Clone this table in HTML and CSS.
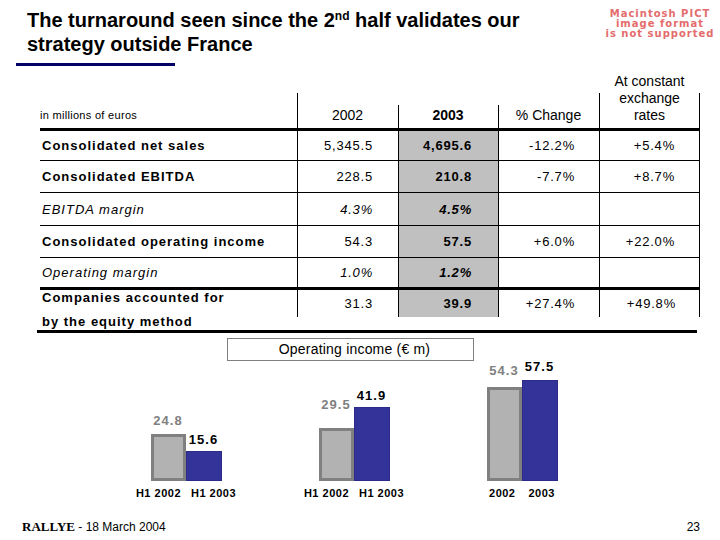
FILE: index.html
```html
<!DOCTYPE html>
<html lang="en">
<head>
<meta charset="utf-8">
<title>The turnaround seen since the 2nd half validates our strategy outside France</title>
<link rel="stylesheet" href="styles.css">
</head>
<body>
<div class="slide">
  <header class="head">
    <h1 class="title">The turnaround seen since the 2<sup>nd</sup> half validates our<br>strategy outside France</h1>
    <div class="pict">Macintosh PICT<br>image format<br>is not supported</div>
  </header>
  <div class="rule"></div>

  <div class="table">
    <div class="cell hd unit">in millions of euros</div>
    <div class="cell hd h1">2002</div>
    <div class="cell hd h2"><b>2003</b></div>
    <div class="cell hd h3">% Change</div>
    <div class="cell hd h4">At constant<br>exchange<br>rates</div>

    <div class="cell lbl">Consolidated net sales</div>
    <div class="cell num c1">5,345.5</div>
    <div class="cell num c2">4,695.6</div>
    <div class="cell num c3">-12.2%</div>
    <div class="cell num c4">+5.4%</div>

    <div class="cell lbl">Consolidated EBITDA</div>
    <div class="cell num c1">228.5</div>
    <div class="cell num c2">210.8</div>
    <div class="cell num c3">-7.7%</div>
    <div class="cell num c4">+8.7%</div>

    <div class="cell lbl it">EBITDA margin</div>
    <div class="cell num c1 it">4.3%</div>
    <div class="cell num c2 it">4.5%</div>
    <div class="cell num c3"></div>
    <div class="cell num c4"></div>

    <div class="cell lbl">Consolidated operating income</div>
    <div class="cell num c1">54.3</div>
    <div class="cell num c2">57.5</div>
    <div class="cell num c3">+6.0%</div>
    <div class="cell num c4">+22.0%</div>

    <div class="cell lbl it thick">Operating margin</div>
    <div class="cell num c1 it thick">1.0%</div>
    <div class="cell num c2 it thick">1.2%</div>
    <div class="cell num c3 thick"></div>
    <div class="cell num c4 thick"></div>

    <div class="cell lbl last"><span>Companies accounted for</span><span class="second">by the equity method</span></div>
    <div class="cell num c1 last">31.3</div>
    <div class="cell num c2 last">39.9</div>
    <div class="cell num c3 last">+27.4%</div>
    <div class="cell num c4 last">+49.8%</div>
  </div>
  <div class="rule-bottom"></div>

  <div class="chart-title">Operating income (€ m)</div>

  <div class="charts">
    <div class="chart">
      <div class="bars">
        <div class="bar-col"><span class="val grey up0b">24.8</span><div class="bar grey" style="height:47px"></div></div>
        <div class="bar-col"><span class="val">15.6</span><div class="bar blue" style="height:30px"></div></div>
      </div>
      <div class="xlabels"><span>H1 2002</span><span>H1 2003</span></div>
    </div>
    <div class="chart">
      <div class="bars">
        <div class="bar-col"><span class="val grey up2">29.5</span><div class="bar grey" style="height:53px"></div></div>
        <div class="bar-col"><span class="val up0">41.9</span><div class="bar blue" style="height:74px"></div></div>
      </div>
      <div class="xlabels"><span>H1 2002</span><span>H1 2003</span></div>
    </div>
    <div class="chart">
      <div class="bars">
        <div class="bar-col"><span class="val grey up1">54.3</span><div class="bar grey" style="height:94px"></div></div>
        <div class="bar-col"><span class="val up0b">57.5</span><div class="bar blue" style="height:101px"></div></div>
      </div>
      <div class="xlabels wide"><span>2002</span><span>2003</span></div>
    </div>
  </div>

  <footer class="foot">
    <span><b class="brand">RALLYE</b> - 18 March 2004</span>
    <span>23</span>
  </footer>
</div>
</body>
</html>
```

FILE: styles.css
```css
* { box-sizing: border-box; }
html, body { margin: 0; padding: 0; background: #fff; }
body {
  width: 720px;
  height: 540px;
  overflow: hidden;
  font-family: "Liberation Sans", Arial, sans-serif;
  color: #000;
}

/* ---------- header ---------- */
.head { display: flex; align-items: flex-start; height: 56px; }
.title {
  margin: 0;
  padding: 8px 0 0 27px;
  font-size: 20px;
  line-height: 24px;
  font-weight: bold;
}
.title sup { font-size: 12px; line-height: 0; vertical-align: 7px; }
.pict {
  margin: 9px 2px 0 auto;
  width: 116px;
  text-align: center;
  font-family: "DejaVu Sans", sans-serif;
  font-weight: bold;
  font-size: 10px;
  line-height: 10px;
  letter-spacing: 1px;
  color: #e46c6c;
}
.rule { margin: 7px 0 0 16px; width: 159px; height: 3px; background: #000066; }

/* ---------- table ---------- */
.table {
  margin: 8px 0 0 40px;
  display: grid;
  grid-template-columns: 257px 101px 100px 101px 101px;
  grid-template-rows: 57px 30px 32px 33px 32px 32px 40px;
}
.cell { display: flex; align-items: center; border-bottom: 1px solid #000; }
.hd {
  border-bottom: 3px solid #000;
  align-items: flex-end;
  justify-content: center;
  text-align: center;
  font-size: 14px;
  line-height: 17px;
  padding-bottom: 4px;
}
.unit { justify-content: flex-start; font-size: 11px; letter-spacing: 0.3px; }
.h1 { background: linear-gradient(#000, #000) left 0 top 19px / 1px 100% no-repeat; }
.h2, .h3 { background: linear-gradient(#000, #000) left 0 top 31px / 1px 100% no-repeat; }
.h4 {
  background:
    linear-gradient(#000, #000) left 0 top 19px / 1px 100% no-repeat,
    linear-gradient(#000, #000) right 0 top 19px / 1px 100% no-repeat;
}

.lbl { padding-left: 2px; font-size: 13px; font-weight: bold; letter-spacing: 1px; }
.num {
  justify-content: flex-end;
  border-left: 1px solid #000;
  font-size: 13px;
  letter-spacing: 0.8px;
}
.it { font-style: italic; }
.lbl.it { font-weight: normal; }
.c1 { padding-right: 25px; }
.c2 { padding-right: 26px; background: #c0c0c0; font-weight: bold; }
.c3 { padding-right: 24px; }
.c4 { padding-right: 24px; border-right: 1px solid #000; }
.thick { border-bottom-width: 3px; }

.last { border-bottom: none; }
.lbl.last { flex-direction: column; align-items: flex-start; line-height: 16px; }
.lbl.last .second { margin-top: 8px; }
.num.last {
  align-items: flex-start;
  line-height: 27px;
  border-left: none;
  background: linear-gradient(#000, #000) left top / 1px 27px no-repeat;
}
.c2.last {
  background:
    linear-gradient(#000, #000) left top / 1px 27px no-repeat,
    linear-gradient(#c0c0c0, #c0c0c0) left top / 100% 27px no-repeat;
}
.c4.last {
  border-right: none;
  background:
    linear-gradient(#000, #000) left top / 1px 27px no-repeat,
    linear-gradient(#000, #000) right top / 1px 27px no-repeat;
}
.rule-bottom { margin-left: 37px; width: 660px; height: 3px; background: #000; }

/* ---------- charts ---------- */
.chart-title {
  margin: 5px 0 0 227px;
  width: 247px;
  height: 23px;
  border: 1px solid #808080;
  padding-left: 8px;
  text-align: center;
  font-size: 14px;
  line-height: 21px;
  letter-spacing: 0.2px;
}
.charts { display: flex; align-items: flex-end; padding-left: 102px; height: 139px; }
.chart { width: 168px; display: flex; flex-direction: column; align-items: center; }
.bars { display: flex; align-items: flex-end; }
.bar-col { display: flex; flex-direction: column; align-items: center; }
.val {
  font-size: 13px;
  font-weight: bold;
  letter-spacing: 1px;
  line-height: 12px;
  margin-bottom: 5px;
}
.val.grey { color: #808080; }
.val.up0 { margin-bottom: 5px; }
.val.up0b { margin-bottom: 7px; }
.val.up1 { margin-bottom: 10px; }
.val.up2 { margin-bottom: 17px; }
.bar.grey { width: 35px; background: #b2b2b2; border: 3px solid #808080; }
.bar.blue { width: 36px; background: #333399; border: 1px solid #2b2b88; }
.xlabels {
  display: flex;
  gap: 10px;
  margin-top: 6px;
  font-size: 11px;
  font-weight: bold;
  letter-spacing: 0.5px;
  line-height: 13px;
}
.xlabels.wide { gap: 13px; }

/* ---------- footer ---------- */
.foot {
  display: flex;
  justify-content: space-between;
  padding: 20px 20px 0 22px;
  font-size: 12px;
  line-height: 14px;
}
.brand { font-family: "Liberation Serif", "Times New Roman", serif; font-size: 13px; }
```
